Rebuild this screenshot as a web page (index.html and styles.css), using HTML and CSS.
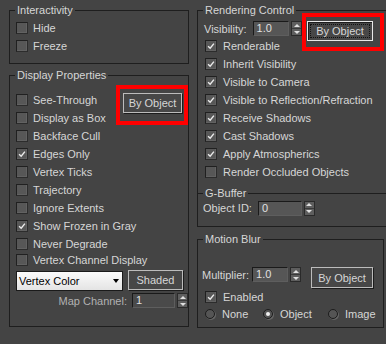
FILE: index.html
```html
<!DOCTYPE html>
<html lang="en">
<head>
    <meta charset="UTF-8">
    <title>Object Properties</title>
    <link rel="stylesheet" href="styles.css">
</head>
<body>
<div class="panel">

    <!-- Left column -->
    <div class="col col-left">
        <fieldset class="group grp-interact">
            <legend>Interactivity</legend>
            <label class="check"><span class="box"></span>Hide</label>
            <label class="check"><span class="box"></span>Freeze</label>
        </fieldset>

        <fieldset class="group grp-display">
            <legend>Display Properties</legend>
            <div class="display-grid">
                <label class="check"><span class="box"></span>See-Through</label>
                <div class="mark mark-left"><button class="btn btn-obj">By Object</button></div>
                <label class="check"><span class="box"></span>Display as Box</label>
                <label class="check wide"><span class="box"></span>Backface Cull</label>
                <label class="check wide"><span class="box on"><svg viewBox="0 0 12 12"><path d="M2.5 6.2 L5 8.6 L9.5 3.2"/></svg></span>Edges Only</label>
                <label class="check wide"><span class="box"></span>Vertex Ticks</label>
                <label class="check wide"><span class="box"></span>Trajectory</label>
                <label class="check wide"><span class="box"></span>Ignore Extents</label>
                <label class="check wide"><span class="box on"><svg viewBox="0 0 12 12"><path d="M2.5 6.2 L5 8.6 L9.5 3.2"/></svg></span>Show Frozen in Gray</label>
                <label class="check wide"><span class="box"></span>Never Degrade</label>
                <label class="check wide"><span class="box"></span>Vertex Channel Display</label>
            </div>
            <div class="combo-row">
                <div class="combo"><span>Vertex Color</span><span class="arrow"></span></div>
                <button class="btn btn-shaded">Shaded</button>
            </div>
            <div class="map-row">
                <span class="lbl dim">Map Channel:</span>
                <span class="field field-map dim">1</span>
                <span class="arrows"><i class="up"></i><i class="dn"></i></span>
            </div>
        </fieldset>
    </div>

    <!-- Right column -->
    <div class="col col-right">
        <fieldset class="group grp-render">
            <legend>Rendering Control</legend>
            <div class="render-grid">
                <div class="spin-row">
                    <span class="lbl">Visibility:</span>
                    <span class="field field-vis">1.0</span>
                    <span class="arrows"><i class="up"></i><i class="dn"></i></span>
                </div>
                <div class="mark mark-right"><button class="btn btn-obj btn-focus"><span>By Object</span></button></div>
                <label class="check"><span class="box on"><svg viewBox="0 0 12 12"><path d="M2.5 6.2 L5 8.6 L9.5 3.2"/></svg></span>Renderable</label>
                <label class="check wide"><span class="box on"><svg viewBox="0 0 12 12"><path d="M2.5 6.2 L5 8.6 L9.5 3.2"/></svg></span>Inherit Visibility</label>
                <label class="check wide"><span class="box on"><svg viewBox="0 0 12 12"><path d="M2.5 6.2 L5 8.6 L9.5 3.2"/></svg></span>Visible to Camera</label>
                <label class="check wide"><span class="box on"><svg viewBox="0 0 12 12"><path d="M2.5 6.2 L5 8.6 L9.5 3.2"/></svg></span>Visible to Reflection/Refraction</label>
                <label class="check wide"><span class="box on"><svg viewBox="0 0 12 12"><path d="M2.5 6.2 L5 8.6 L9.5 3.2"/></svg></span>Receive Shadows</label>
                <label class="check wide"><span class="box on"><svg viewBox="0 0 12 12"><path d="M2.5 6.2 L5 8.6 L9.5 3.2"/></svg></span>Cast Shadows</label>
                <label class="check wide"><span class="box on"><svg viewBox="0 0 12 12"><path d="M2.5 6.2 L5 8.6 L9.5 3.2"/></svg></span>Apply Atmospherics</label>
                <label class="check wide"><span class="box"></span>Render Occluded Objects</label>
            </div>

            <div class="subhead"><span>G-Buffer</span></div>
            <div class="spin-row id-row">
                <span class="lbl">Object ID:</span>
                <span class="field field-id">0</span>
                <span class="arrows"><i class="up"></i><i class="dn"></i></span>
            </div>
        </fieldset>

        <fieldset class="group grp-blur">
            <legend>Motion Blur</legend>
            <div class="mult-row">
                <span class="lbl">Multiplier:</span>
                <span class="field field-mult">1.0</span>
                <span class="arrows"><i class="up"></i><i class="dn"></i></span>
                <button class="btn btn-blur">By Object</button>
            </div>
            <label class="check enabled"><span class="box on"><svg viewBox="0 0 12 12"><path d="M2.5 6.2 L5 8.6 L9.5 3.2"/></svg></span>Enabled</label>
            <div class="radio-row">
                <label class="radio r-none"><span class="dot"></span>None</label>
                <label class="radio r-object"><span class="dot on"></span>Object</label>
                <label class="radio r-image"><span class="dot"></span>Image</label>
            </div>
        </fieldset>
    </div>

</div>
</body>
</html>
```

FILE: styles.css
```css
* {
    margin: 0;
    padding: 0;
    box-sizing: border-box;
}

body {
    width: 386px;
    height: 344px;
    overflow: hidden;
    background-color: #444444;
    color: #d6d6d6;
    font-family: "Liberation Sans", Arial, sans-serif;
    font-size: 11px;
}

.panel {
    display: flex;
    gap: 8px;
    padding-left: 9px;
}

.col-left {
    width: 180px;
    flex: none;
}

.col-right {
    width: 196px;
    flex: none;
}

/* Group boxes */
.group {
    border: 1px solid #1e1e1e;
    min-width: 0;
}

.group legend {
    line-height: 12px;
    padding: 0 2px;
    margin-left: -1px;
}

.grp-interact {
    margin-top: 4px;
    padding: 3px 0 8px 6px;
}

.grp-display {
    margin-top: 5px;
    padding: 10px 0 18px 6px;
}

.grp-render {
    margin-top: 4px;
    padding: 4px 0 10px 7px;
}

.grp-blur {
    width: 187px;
    margin-top: 6px;
    padding: 22px 0 4px 7px;
}

.grp-render legend,
.grp-blur legend {
    margin-left: -2px;
}

/* Checkboxes */
.check {
    display: flex;
    align-items: center;
    height: 18px;
    white-space: nowrap;
}

.box {
    width: 12px;
    height: 12px;
    margin-right: 5px;
    flex: none;
    background-color: #575757;
    border: 1px solid #202020;
    border-right-color: #2c2c2c;
    border-bottom-color: #2c2c2c;
    box-shadow: inset -1px -1px 0 #626262;
}

.box svg {
    display: block;
    width: 10px;
    height: 10px;
}

.box svg path {
    fill: none;
    stroke: #ececec;
    stroke-width: 1.7;
}

.grp-render .box,
.grp-blur .box {
    margin-right: 6px;
}

/* Display properties grid */
.display-grid {
    display: grid;
    grid-template-columns: 1fr 72px;
    grid-template-rows: repeat(9, 18px) 14px;
}

.wide {
    grid-column: 1 / -1;
}

.display-grid .check:last-child {
    height: 14px;
}

/* Red annotation frames */
.mark {
    border: 4px solid #ff0000;
    grid-row: span 2;
    align-self: start;
}

.mark-left {
    height: 40px;
    margin-top: -6px;
    padding: 4px 0 0 3px;
}

.mark-right {
    width: 82px;
    height: 38px;
    margin-top: -7px;
    padding: 4px 0 0 1px;
}

/* Buttons */
.btn {
    font: inherit;
    color: #d6d6d6;
    background-color: #474747;
    border: 1px solid #bcbcbc;
    box-shadow: 1px 1px 0 #1c1c1c;
    cursor: pointer;
}

.mark-left .btn-obj {
    width: 59px;
    height: 20px;
}

.btn-focus {
    width: 66px;
    height: 20px;
    padding: 2px;
    border-color: #e8e8e8;
    box-shadow: inset 1px 1px 0 #1c1c1c;
}

.btn-focus span {
    display: block;
    height: 100%;
    line-height: 12px;
    border: 1px dotted #111111;
}

/* Combo and map channel */
.combo-row {
    display: flex;
    align-items: flex-start;
    gap: 5px;
    margin-top: 3px;
    height: 21px;
}

.combo {
    width: 107px;
    height: 20px;
    margin-top: 1px;
    display: flex;
    align-items: center;
    justify-content: space-between;
    padding: 0 3px 0 2px;
    color: #000000;
    background: linear-gradient(#fbfbfb, #e4e4e4);
    border: 1px solid #1a1a1a;
}

.combo .arrow {
    width: 0;
    height: 0;
    border-left: 3.5px solid transparent;
    border-right: 3.5px solid transparent;
    border-top: 4px solid #000000;
}

.btn-shaded {
    width: 55px;
    height: 20px;
}

.map-row {
    display: flex;
    align-items: center;
    margin-top: 2px;
    height: 15px;
}

.map-row .lbl {
    flex: 1;
    text-align: right;
    margin-right: 5px;
}

.dim {
    color: #b2b2b2;
}

/* Spinner fields */
.spin-row {
    display: flex;
    align-items: center;
}

.lbl {
    white-space: nowrap;
}

.field {
    height: 15px;
    line-height: 13px;
    padding-left: 3px;
    background-color: #565656;
    border: 1px solid #1a1a1a;
    border-right-color: #5e5e5e;
    border-bottom-color: #5e5e5e;
    color: #e0e0e0;
}

.field-map {
    width: 43px;
    background-color: #4a4a4a;
}

.field-vis {
    width: 38px;
    margin-left: 6px;
}

.field-id {
    width: 44px;
    margin-left: 6px;
}

.field-mult {
    width: 36px;
    margin-left: 3px;
}

.arrows {
    width: 11px;
    height: 15px;
    margin-left: 2px;
    display: flex;
    flex-direction: column;
    background-color: #5e5e5e;
    border: 1px solid #2a2a2a;
}

.arrows i {
    flex: 1;
    display: flex;
    align-items: center;
    justify-content: center;
}

.arrows i::before {
    content: "";
    border-left: 3px solid transparent;
    border-right: 3px solid transparent;
}

.arrows .up {
    border-bottom: 1px solid #3a3a3a;
}

.arrows .up::before {
    border-bottom: 3px solid #e0e0e0;
}

.arrows .dn::before {
    border-top: 3px solid #e0e0e0;
}

/* Rendering control grid */
.render-grid {
    display: grid;
    grid-template-columns: 97px 1fr;
    grid-template-rows: 17px repeat(8, 18px);
}

.render-grid .spin-row .lbl {
    margin-left: -1px;
}

.subhead {
    display: flex;
    align-items: center;
    height: 12px;
    margin: 6px 0 1px -7px;
    line-height: 12px;
}

.subhead::before {
    content: "";
    width: 5px;
    border-top: 1px solid #1e1e1e;
}

.subhead::after {
    content: "";
    flex: 1;
    border-top: 1px solid #1e1e1e;
}

.subhead span {
    padding: 0 2px;
}

.id-row {
    height: 16px;
}

.id-row .lbl {
    margin-left: -2px;
}

/* Motion blur */
.mult-row {
    display: flex;
    align-items: flex-start;
    height: 21px;
}

.mult-row .lbl {
    margin-left: -3px;
    line-height: 17px;
}

.btn-blur {
    width: 62px;
    height: 21px;
    margin-left: 10px;
}

.enabled {
    height: 17px;
}

.radio-row {
    display: flex;
    height: 18px;
    align-items: center;
}

.radio {
    display: flex;
    align-items: center;
}

.r-none {
    width: 58px;
}

.r-object {
    width: 65px;
}

.dot {
    width: 10px;
    height: 10px;
    margin-right: 7px;
    border-radius: 50%;
    background-color: #555555;
    border: 1px solid #1c1c1c;
    box-shadow: 1px 1px 0 #666666;
    display: flex;
    align-items: center;
    justify-content: center;
}

.dot.on::before {
    content: "";
    width: 4px;
    height: 4px;
    border-radius: 50%;
    background-color: #f0f0f0;
}
```
